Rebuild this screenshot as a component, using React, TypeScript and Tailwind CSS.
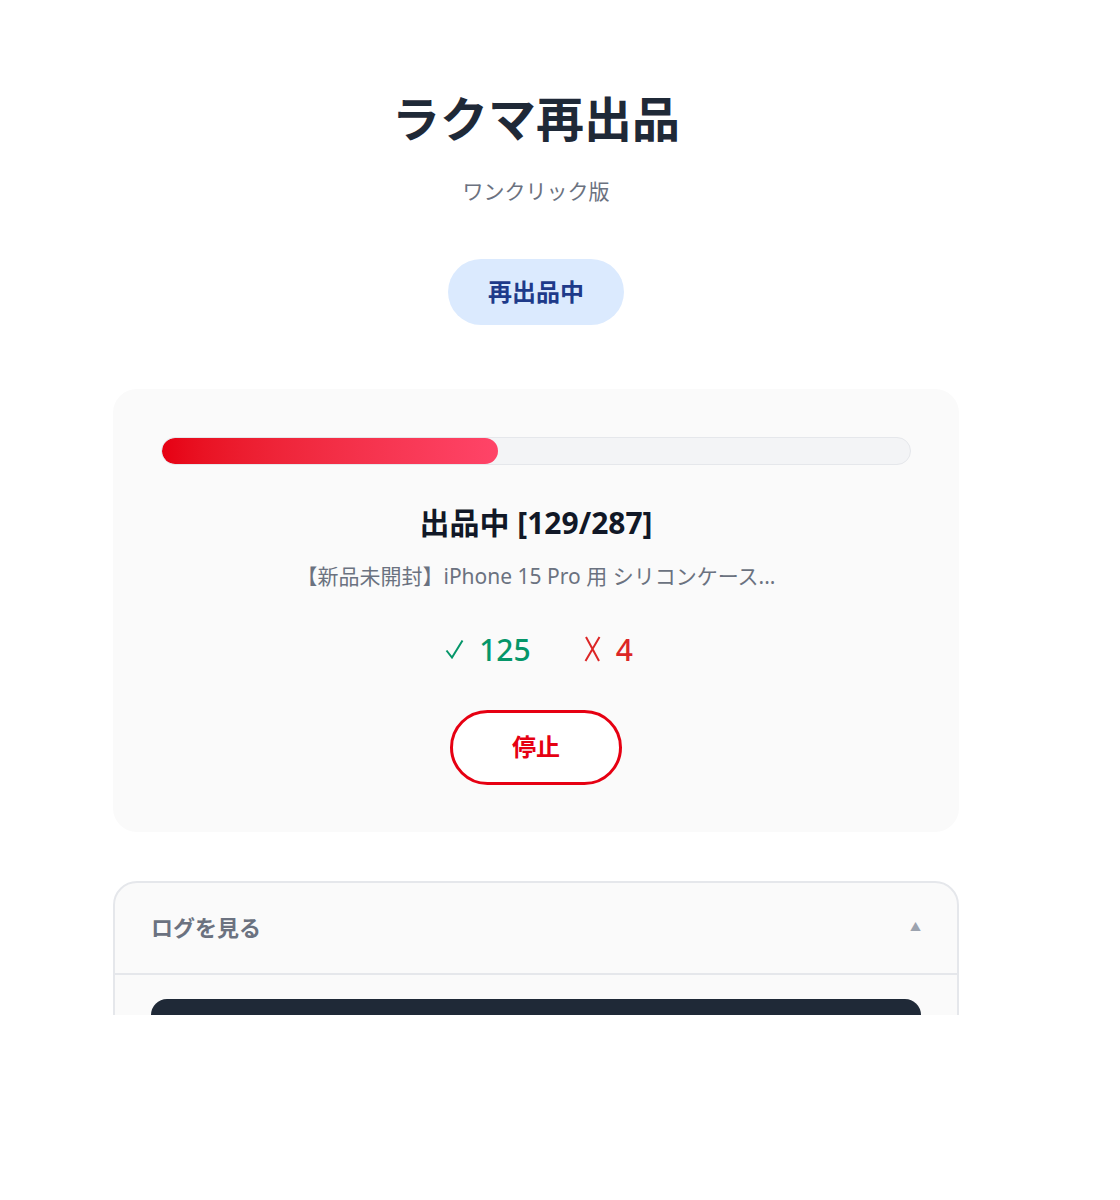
import { useState } from 'react'

const done = 129
const total = 287

export default function App() {
  const [logOpen, setLogOpen] = useState(true)
  const pct = (done / total) * 100

  return (
    <div
      className="h-[1015px] w-[1072px] overflow-hidden bg-white"
      style={{ fontFamily: '"Noto Sans", "Noto Sans CJK JP", sans-serif' }}
    >
      <div className="mx-auto w-[846px] pt-[90px]">
        {/* Header */}
        <div className="text-center">
          <h1 className="text-[48px] font-bold leading-[1.2] text-[#1f2937]">ラクマ再出品</h1>
          <p className="mt-[28px] text-[21px] text-[#6b7280]">ワンクリック版</p>
        </div>

        {/* Status badge */}
        <div className="mt-[52px] flex justify-center">
          <span className="flex h-[66px] w-[176px] items-center justify-center rounded-full bg-[#dbeafe] text-[24px] font-bold text-[#1e3a8a]">
            再出品中
          </span>
        </div>

        {/* Progress card */}
        <div className="mt-[64px] rounded-[24px] bg-[#fafafa] px-[48px] pt-[48px] pb-[47px] text-center">
          <div className="h-[28px] w-full overflow-hidden rounded-full border border-[#e5e7eb] bg-[#f3f4f6]">
            <div
              className="h-full rounded-full bg-gradient-to-r from-[#e60012] to-[#ff4468]"
              style={{ width: `${pct}%` }}
            />
          </div>

          <div className="mt-[35px] text-[30px] font-bold text-[#111827]">出品中 [{done}/{total}]</div>
          <div className="mt-[16px] text-[21px] text-[#6b7280]">【新品未開封】iPhone 15 Pro 用 シリコンケース...</div>

          <div className="mt-[34px] flex items-center justify-center gap-[53px] pl-[6px] text-[30px] font-medium">
            <span className="flex items-center gap-[15px] text-[#059669]">
              <svg width="19" height="20" viewBox="0 0 19 20" fill="none" stroke="currentColor" strokeWidth="2">
                <path d="M1.5 11.5 L7 18.5 L17.5 1.5" />
              </svg>
              125
            </span>
            <span className="flex items-center gap-[15px] text-[#dc2626]">
              <svg width="17" height="26" viewBox="0 0 17 26" fill="none" stroke="currentColor" strokeWidth="2">
                <path d="M2 1 L15 25 M15.5 1 L1.5 25" />
              </svg>
              4
            </span>
          </div>

          <div className="mt-[38px] flex justify-center">
            <button className="h-[75px] w-[172px] rounded-full border-[3px] border-[#e60012] bg-white text-[24px] font-bold text-[#e60012]">
              停止
            </button>
          </div>
        </div>

        {/* Log panel */}
        <div className="mt-[49px] rounded-t-[24px] border-2 border-[#e5e7eb] bg-[#fafafa]">
          <button
            onClick={() => setLogOpen(!logOpen)}
            className="flex h-[90px] w-full items-center justify-between px-[36px] text-left"
          >
            <span className="text-[22px] font-semibold text-[#6b7280]">ログを見る</span>
            <span className="text-[11px] text-[#9ca3af]">{logOpen ? '▲' : '▼'}</span>
          </button>
          {logOpen && (
            <div className="border-t-2 border-[#e5e7eb] px-[36px] pt-[24px]">
              <div className="h-[300px] rounded-t-[16px] bg-[#1f2937]" />
            </div>
          )}
        </div>
      </div>
    </div>
  )
}
